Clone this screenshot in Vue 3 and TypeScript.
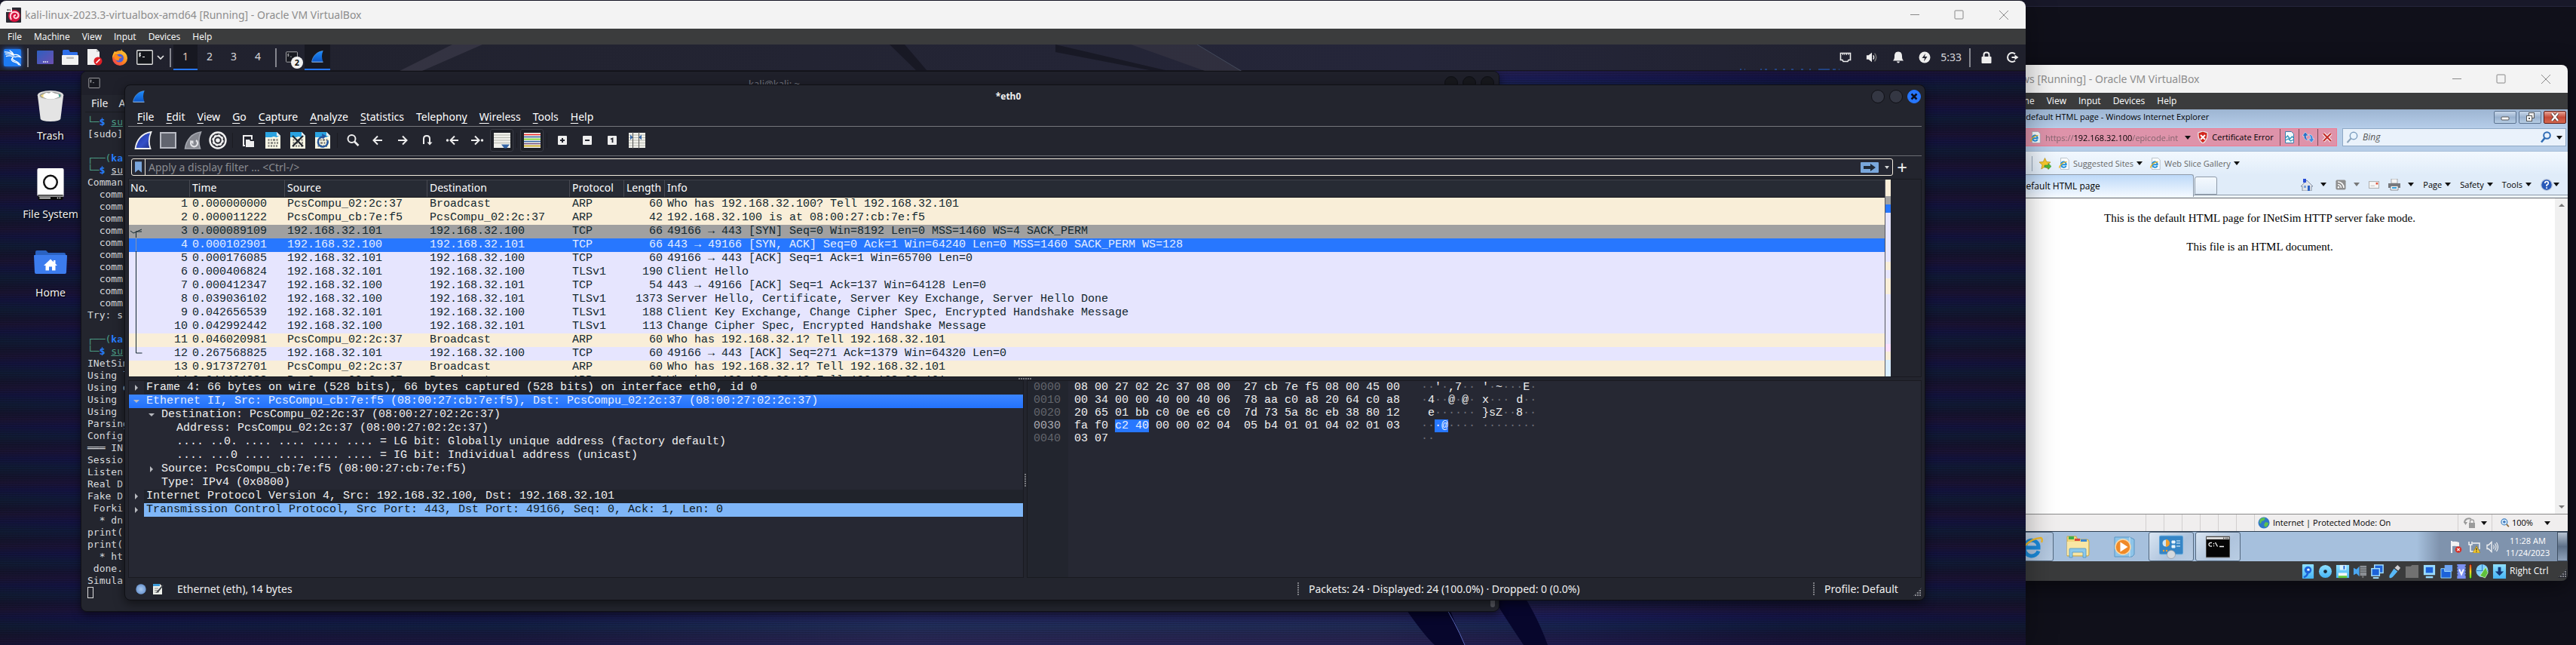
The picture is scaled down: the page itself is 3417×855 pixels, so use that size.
<script setup lang="ts">
type Tone = 'arp' | 'syn' | 'sel' | 'tcp' | 'udp' | 'dns'

interface Packet {
  no: number
  time: string
  src: string
  dst: string
  proto: string
  len: number
  info: string
  tone: Tone
}

const A = '192.168.32.100'
const B = '192.168.32.101'
const MAC1 = 'PcsCompu_02:2c:37'
const MAC2 = 'PcsCompu_cb:7e:f5'

const packets: Packet[] = [
  { no: 1, time: '0.000000000', src: MAC1, dst: 'Broadcast', proto: 'ARP', len: 60, info: 'Who has 192.168.32.100? Tell 192.168.32.101', tone: 'arp' },
  { no: 2, time: '0.000011222', src: MAC2, dst: MAC1, proto: 'ARP', len: 42, info: '192.168.32.100 is at 08:00:27:cb:7e:f5', tone: 'arp' },
  { no: 3, time: '0.000089109', src: B, dst: A, proto: 'TCP', len: 66, info: '49166 → 443 [SYN] Seq=0 Win=8192 Len=0 MSS=1460 WS=4 SACK_PERM', tone: 'syn' },
  { no: 4, time: '0.000102901', src: A, dst: B, proto: 'TCP', len: 66, info: '443 → 49166 [SYN, ACK] Seq=0 Ack=1 Win=64240 Len=0 MSS=1460 SACK_PERM WS=128', tone: 'sel' },
  { no: 5, time: '0.000176085', src: B, dst: A, proto: 'TCP', len: 60, info: '49166 → 443 [ACK] Seq=1 Ack=1 Win=65700 Len=0', tone: 'tcp' },
  { no: 6, time: '0.000406824', src: B, dst: A, proto: 'TLSv1', len: 190, info: 'Client Hello', tone: 'tcp' },
  { no: 7, time: '0.000412347', src: A, dst: B, proto: 'TCP', len: 54, info: '443 → 49166 [ACK] Seq=1 Ack=137 Win=64128 Len=0', tone: 'tcp' },
  { no: 8, time: '0.039036102', src: A, dst: B, proto: 'TLSv1', len: 1373, info: 'Server Hello, Certificate, Server Key Exchange, Server Hello Done', tone: 'tcp' },
  { no: 9, time: '0.042656539', src: B, dst: A, proto: 'TLSv1', len: 188, info: 'Client Key Exchange, Change Cipher Spec, Encrypted Handshake Message', tone: 'tcp' },
  { no: 10, time: '0.042992442', src: A, dst: B, proto: 'TLSv1', len: 113, info: 'Change Cipher Spec, Encrypted Handshake Message', tone: 'tcp' },
  { no: 11, time: '0.046020981', src: MAC1, dst: 'Broadcast', proto: 'ARP', len: 60, info: 'Who has 192.168.32.1? Tell 192.168.32.101', tone: 'arp' },
  { no: 12, time: '0.267568825', src: B, dst: A, proto: 'TCP', len: 60, info: '49166 → 443 [ACK] Seq=271 Ack=1379 Win=64320 Len=0', tone: 'tcp' },
  { no: 13, time: '0.917372701', src: MAC1, dst: 'Broadcast', proto: 'ARP', len: 60, info: 'Who has 192.168.32.1? Tell 192.168.32.101', tone: 'arp' },
  { no: 14, time: '0.944494888', src: MAC1, dst: 'Broadcast', proto: 'ARP', len: 60, info: 'Who has 192.168.32.1? Tell 192.168.32.101', tone: 'arp' },
]

const minimap: Tone[] = [
  ...packets.map((p) => p.tone),
  'tcp', 'tcp', 'tcp', 'tcp', 'tcp', 'tcp', 'dns', 'arp', 'udp', 'udp',
]

interface TreeRow { level: number; open?: boolean; leaf?: boolean; text: string; tone?: string }
const tree: TreeRow[] = [
  { level: 0, text: 'Frame 4: 66 bytes on wire (528 bits), 66 bytes captured (528 bits) on interface eth0, id 0', tone: 'top' },
  { level: 0, open: true, text: 'Ethernet II, Src: PcsCompu_cb:7e:f5 (08:00:27:cb:7e:f5), Dst: PcsCompu_02:2c:37 (08:00:27:02:2c:37)', tone: 'picked' },
  { level: 1, open: true, text: 'Destination: PcsCompu_02:2c:37 (08:00:27:02:2c:37)' },
  { level: 2, leaf: true, text: 'Address: PcsCompu_02:2c:37 (08:00:27:02:2c:37)' },
  { level: 2, leaf: true, text: '.... ..0. .... .... .... .... = LG bit: Globally unique address (factory default)' },
  { level: 2, leaf: true, text: '.... ...0 .... .... .... .... = IG bit: Individual address (unicast)' },
  { level: 1, text: 'Source: PcsCompu_cb:7e:f5 (08:00:27:cb:7e:f5)' },
  { level: 1, leaf: true, text: 'Type: IPv4 (0x0800)' },
  { level: 0, text: 'Internet Protocol Version 4, Src: 192.168.32.100, Dst: 192.168.32.101', tone: 'top' },
  { level: 0, text: 'Transmission Control Protocol, Src Port: 443, Dst Port: 49166, Seq: 0, Ack: 1, Len: 0', tone: 'related' },
]

interface HexRow { off: string; hex: string; ascii: string; mark?: boolean }
const hexRows: HexRow[] = [
  { off: '0000', hex: '08 00 27 02 2c 37 08 00  27 cb 7e f5 08 00 45 00', ascii: "··'·,7·· '·~···E·" },
  { off: '0010', hex: '00 34 00 00 40 00 40 06  78 aa c0 a8 20 64 c0 a8', ascii: '·4··@·@· x··· d··' },
  { off: '0020', hex: '20 65 01 bb c0 0e e6 c0  7d 73 5a 8c eb 38 80 12', ascii: ' e······ }sZ··8··' },
  { off: '0030', hex: 'fa f0 c2 40 00 00 02 04  05 b4 01 01 04 02 01 03', ascii: '···@···· ········', mark: true },
  { off: '0040', hex: '03 07', ascii: '··' },
]
const runs = (s: string) => s.match(/·+|[^·]+/g) ?? []

const wsMenu = ['File', 'Edit', 'View', 'Go', 'Capture', 'Analyze', 'Statistics', 'Telephony', 'Wireless', 'Tools', 'Help'].map((t) => {
  const i = t === 'Telephony' ? t.length - 1 : 0
  return { pre: t.slice(0, i), key: t[i], post: t.slice(i + 1), label: t }
})

const wsTools: string[][] = [
  ['fin', 'stop', 'restart', 'options'],
  ['open', 'docbin', 'docclose', 'docreload'],
  ['search', 'left', 'right', 'goto', 'first', 'last', 'autoscroll'],
  ['colorize'],
  ['zin', 'zout', 'zone', 'resize'],
]

const vmMenu = ['File', 'Machine', 'View', 'Input', 'Devices', 'Help']
const headers = ['No.', 'Time', 'Source', 'Destination', 'Protocol', 'Length', 'Info']
const shellA = ['Comman', '  comm', '  comm', '  comm', '  comm', '  comm', '  comm', '  comm', '  comm', '  comm', '  comm', 'Try: s']
const shellB = ['INetSim', 'Using l', 'Using d', 'Using', 'Using', 'Parsing', 'Config', '═══ IN', 'Sessio', 'Listen', 'Real D', 'Fake D', ' Forki', '  * dn', 'print(', 'print(', '  * ht', ' done.', 'Simula']
const vmIcons = ['hdd', 'cd', 'floppy', 'audio', 'net', 'usb', 'folder', 'display', 'record', 'cpu', 'meter', 'mouse', 'arrowdn']
</script>

<template>
  <div class="desktop">
    <svg class="defs" aria-hidden="true">
      <defs>
        <linearGradient id="gBlue" x1="0" y1="0" x2="1" y2="1"><stop offset="0" stop-color="#1a2f9e" /><stop offset=".6" stop-color="#3450c8" /><stop offset="1" stop-color="#1b2a80" /></linearGradient>
        <linearGradient id="gFin" x1="0" y1="0" x2="0" y2="1"><stop offset="0" stop-color="#1f8dfb" /><stop offset="1" stop-color="#0a54c4" /></linearGradient>
        <linearGradient id="gDesk" x1="0" y1="0" x2="1" y2="1"><stop offset="0" stop-color="#2d5fc0" /><stop offset="1" stop-color="#6d4fb0" /></linearGradient>
        <linearGradient id="gFox" x1="1" y1="0" x2="0" y2="1"><stop offset="0" stop-color="#ffd83a" /><stop offset=".5" stop-color="#ff8420" /><stop offset="1" stop-color="#f0305a" /></linearGradient>
        <linearGradient id="gVm" x1="0" y1="0" x2="0" y2="1"><stop offset="0" stop-color="#8fe0ff" /><stop offset="1" stop-color="#45b4f5" /></linearGradient>
        <radialGradient id="gBall"><stop offset="0" stop-color="#a8c8ef" /><stop offset="1" stop-color="#6d97d0" /></radialGradient>
        <linearGradient id="gMeter" x1="0" y1="0" x2="0" y2="1"><stop offset="0" stop-color="#ff3b20" /><stop offset=".5" stop-color="#ffd820" /><stop offset="1" stop-color="#50e020" /></linearGradient>
        <symbol id="i-debian" viewBox="0 0 20 20"><rect width="20" height="20" rx="1" fill="#2b2b33" /><circle cx="11" cy="11" r="8" fill="#d8123f" /><path d="M7 16c-3-6 0-11 6-10 4 1 5 6 1 8-4 1-5-4-1-4" fill="none" stroke="#ffd5dd" stroke-width="2" /><rect width="8" height="6" fill="#f4f4f4" /><path d="M2 2v2h1V2M5 2v2h1" stroke="#222" stroke-width=".8" fill="none" /></symbol>
        <symbol id="i-kali" viewBox="0 0 26 26"><rect x="1" y="1" width="24" height="24" rx="2" fill="#1d7bf2" /><path d="M2 5c6 0 10 1 13 4M3 8c5-1 9 0 12 2M4 11c3-1 6-1 9 0M9 3c2 1 4 3 6 6 4-1 7 0 9 3-3-1-5-1-7 0-3-1-6 1-3 4 3 2 8 2 10 8M14 13c-4 2-2 5 2 6 3 1 5 2 6 4" fill="none" stroke="#fff" stroke-width="1.3" /></symbol>
        <symbol id="i-deskt" viewBox="0 0 22 18"><rect width="22" height="18" rx="1" fill="url(#gDesk)" /><path d="M8 15h1.500M10.500 15h1.500M13 15h1.500" stroke="#fff" stroke-width="1.500" /></symbol>
        <symbol id="i-files" viewBox="0 0 22 20"><path d="M1 1.500Q1 0 2.500 0H9l2 3h9q1 0 1 1v5H1z" fill="#2f6fe8" /><rect y="7" width="22" height="13" rx="1" fill="#f2f2f2" /><rect x="6" y="9.500" width="10" height="2.500" rx="1" fill="#bdbdbd" /></symbol>
        <symbol id="i-text" viewBox="0 0 22 22"><path d="M1 0h12l4 4v17H1z" fill="#f1f1f1" /><path d="M13 0v4h4z" fill="#c4c4c4" /><circle cx="15" cy="16" r="5.500" fill="#dd1f26" /><path d="M12.500 18.500l5-5" stroke="#fff" stroke-width="1.600" /></symbol>
        <symbol id="i-fox" viewBox="0 0 22 22"><circle cx="11" cy="12" r="10" fill="url(#gFox)" /><path d="M13 0c-1 3 0 4 2 6l-7-1L4 3C2 6 1 9 1 12l4-6 12 2z" fill="#ffb52a" /><circle cx="10.500" cy="12" r="5.500" fill="#4b5fd8" /><path d="M3 8c3-1 5 0 7 2 2 0 3 0 4 1-2 1-5 1-4 4-4 1-7-2-7-7z" fill="#ff8a1c" /></symbol>
        <symbol id="i-term" viewBox="0 0 22 20"><rect x=".75" y=".75" width="20.500" height="18.500" rx="1" fill="#14161b" stroke="#e6e6e6" stroke-width="1.300" /><path d="M6 5c-3-1-3 1.500-1.500 1.500S6 9 3.200 8M4.600 3.500v6M8 9.500h3" stroke="#fff" stroke-width="1" fill="none" /></symbol>
        <symbol id="i-chev" viewBox="0 0 10 8"><path d="M1 2l4 4 4-4" fill="none" stroke="#e8e8e8" stroke-width="1.600" /></symbol>
        <symbol id="i-shark" viewBox="0 0 16 16"><path d="M.5 15C2 7 7 1.500 15.500.5 13.500 5 13.500 10 15.500 15z" fill="url(#gFin)" /><path d="M.5 15.200h15" stroke="#9cc6f4" stroke-width="1" /><path d="M.5 15C2 7 7 1.500 15.500.5" fill="none" stroke="#6fa8e8" stroke-width=".6" /></symbol>
        <symbol id="i-nic" viewBox="0 0 16 16"><path d="M1.500 2.500h13v9h-2.500l-1 2H5l-1-2H1.500z" fill="none" stroke="#eee" stroke-width="1.600" /><path d="M4.500 3v2M7 3v2M9.500 3v2M12 3v2" stroke="#eee" stroke-width="1" /></symbol>
        <symbol id="i-vol" viewBox="0 0 18 16"><path d="M1 5h3l5-4v14l-5-4H1z" fill="#eee" /><path d="M11 5q2 3 0 6" stroke="#eee" stroke-width="1.600" fill="none" /><path d="M13 2q5 6 0 12" stroke="#777" stroke-width="1.600" fill="none" /></symbol>
        <symbol id="i-bell" viewBox="0 0 16 16"><path d="M8 .5c4 0 5 3 5 6s.5 4.500 2 6H1c1.500-1.500 2-3 2-6s1-6 5-6z" fill="#eee" /><path d="M6 13.500h4q-.5 2-2 2t-2-2z" fill="#eee" /></symbol>
        <symbol id="i-power" viewBox="0 0 16 16"><circle cx="8" cy="8" r="7.500" fill="#eee" /><path d="M9 3L4.500 9H8l-1 4.500L11.500 7H8z" fill="#23242f" /></symbol>
        <symbol id="i-lock" viewBox="0 0 16 16"><rect x="1.500" y="7" width="13" height="9" rx="1" fill="#eee" /><path d="M4.500 7V4.500q0-3 3.500-3t3.500 3V7" fill="none" stroke="#eee" stroke-width="2" /></symbol>
        <symbol id="i-out" viewBox="0 0 16 16"><path d="M11 3.500A6 6 0 1 0 11 12.500" fill="none" stroke="#eee" stroke-width="2" /><path d="M6.500 8h5" stroke="#eee" stroke-width="2" /><path d="M10.500 4.500L15.500 8l-5 3.500z" fill="#eee" /></symbol>
        <symbol id="i-trash" viewBox="0 0 36 44"><path d="M0 7l4 33q1 4 14 4t14-4l4-33z" fill="#e4e4e4" /><ellipse cx="18" cy="7.500" rx="18" ry="6.500" fill="#dcdcdc" /><ellipse cx="18" cy="8" rx="15" ry="5" fill="#9a9a9a" /><path d="M4 8l6-3 3 5-5 1z" fill="#f0d880" /><path d="M27 6l5 1-1 3-5 1z" fill="#38a08c" /><path d="M8 7l4-3 4 1 3-2 5 2 5 1 1 4q-6 3-12 3t-10-3z" fill="#fff" /></symbol>
        <symbol id="i-disk" viewBox="0 0 36 43"><rect width="36" height="38" rx="2" fill="#fdfdfd" /><circle cx="18" cy="19" r="9" fill="none" stroke="#111" stroke-width="2.500" /><path d="M1 36h34v5q0 2-2 2H3q-2 0-2-2z" fill="#0b0b0b" /><path d="M2 38h34" stroke="#fdfdfd" stroke-width="1" /><path d="M3 40.500h15M27 40.500h1.500M30 40.500h1.500" stroke="#fff" stroke-width="1.500" /></symbol>
        <symbol id="i-home" viewBox="0 0 44 32"><path d="M2 2q0-2 2-2h12l3 3h21q2 0 2 2v9H2z" fill="#2a62c2" /><path d="M0 7q0-1 1-1h42q1 0 1 1l-1 22q0 2-2 2H3q-2 0-2-2z" fill="#3c7cee" /><path d="M22 11.500L13 20h2.500v6.500h4.500v-5h4v5h4.500V20H31l-2.500-2.400V13H26v2.200z" fill="#fff" /></symbol>
        <symbol id="t-fin" viewBox="0 0 24 24"><path d="M1.500 23C3 12 10 2.500 22.500 1 19 9 19 16 21.500 23z" fill="url(#gBlue)" stroke="#f0f0f0" stroke-width="1.800" /></symbol>
        <symbol id="t-stop" viewBox="0 0 24 24"><rect x="2" y="2" width="20" height="20" fill="#62656f" stroke="#b9bbc3" stroke-width="2" /></symbol>
        <symbol id="t-restart" viewBox="0 0 24 24"><path d="M1.500 23C3 12 10 2.500 22.500 1 19 9 19 16 21.500 23z" fill="#85878f" stroke="#a6a8b0" stroke-width="1.600" /><path d="M10 13a4.500 4.500 0 1 0 6-1" fill="none" stroke="#e2e2e6" stroke-width="2.200" /><path d="M7.500 12.500h5v5z" fill="#e2e2e6" /></symbol>
        <symbol id="t-options" viewBox="0 0 24 24"><circle cx="12" cy="12" r="11.700" fill="#f1f1f1" /><circle cx="12" cy="12" r="9.300" fill="#2c2d35" /><circle cx="12" cy="12" r="7" fill="#f1f1f1" stroke="#f1f1f1" stroke-width="1.500" stroke-dasharray="3 2.500" /><circle cx="12" cy="12" r="3.800" fill="#f1f1f1" stroke="#2c2d35" stroke-width="2" /></symbol>
        <symbol id="t-open" viewBox="0 0 24 24"><path d="M8 19H6V6h11v5" fill="none" stroke="#eee" stroke-width="2" /><path d="M9 11h5l1 2h5v8H9z" fill="#eee" /></symbol>
        <symbol id="d-base" viewBox="0 0 24 24"><path d="M2 1h15l5 5v17H2z" fill="#f7f6e4" /><path d="M2 1h15l5 5-3 .5L17 8l-4-1-3 1H2z" fill="#2aa3e0" /><path d="M17 1v5h5z" fill="#eee" /><path d="M5.500 11.500h2M9 11.500h1.500M12 11.500h3M16.500 11.500h2M5.500 15.500h2M9 15.500h3M13.500 15.500h2M17 15.500h2M5.500 19.500h2M9 19.500h2M12.500 19.500h2M16 19.500h2" stroke="#7d7d78" stroke-width="2.600" /></symbol>
        <symbol id="t-docbin" viewBox="0 0 24 24"><use href="#d-base" /></symbol>
        <symbol id="t-docclose" viewBox="0 0 24 24"><use href="#d-base" /><path d="M5 6l14 14M19 6L5 20" stroke="#23272d" stroke-width="2.200" /></symbol>
        <symbol id="t-docreload" viewBox="0 0 24 24"><use href="#d-base" /><path d="M18.500 12a6.500 6.500 0 1 1-6-4.500" fill="none" stroke="#24569c" stroke-width="2.400" /><path d="M11 3l6 3.500-5 4z" fill="#24569c" /></symbol>
        <symbol id="t-search" viewBox="0 0 24 24"><circle cx="10.500" cy="10" r="5" fill="none" stroke="#eee" stroke-width="2" /><path d="M14 13.500l5.500 5.500" stroke="#eee" stroke-width="2.600" /></symbol>
        <symbol id="t-left" viewBox="0 0 24 24"><path d="M18 12H7M12 6.500L6.500 12l5.500 5.500" fill="none" stroke="#eee" stroke-width="2" /></symbol>
        <symbol id="t-right" viewBox="0 0 24 24"><path d="M6 12h11M12 6.500l5.500 5.500-5.500 5.500" fill="none" stroke="#eee" stroke-width="2" /></symbol>
        <symbol id="t-goto" viewBox="0 0 24 24"><path d="M7 17V10q0-4 4-4t4 4v7" fill="none" stroke="#eee" stroke-width="2" /><path d="M11.500 14.500h7L15 18.500z" fill="#eee" /></symbol>
        <symbol id="t-first" viewBox="0 0 24 24"><path d="M20 12h-9M15 6.500L9.500 12l5.500 5.500" fill="none" stroke="#eee" stroke-width="2" /><circle cx="5.500" cy="12" r="1.700" fill="#eee" /></symbol>
        <symbol id="t-last" viewBox="0 0 24 24"><path d="M4 12h9M9 6.500l5.500 5.500L9 17.500" fill="none" stroke="#eee" stroke-width="2" /><circle cx="18.500" cy="12" r="1.700" fill="#eee" /></symbol>
        <symbol id="t-autoscroll" viewBox="0 0 24 24"><rect x="1" y="2" width="22" height="20" fill="#f0f0ea" /><path d="M1 5h22M1 8.500h22M1 12h22M1 15.500h22" stroke="#b5b8ae" stroke-width="1.200" /><path d="M11 17.500h11l-4 5h-3z" fill="#3465a4" /></symbol>
        <symbol id="t-colorize" viewBox="0 0 24 24"><rect x="1" y="2" width="22" height="20" fill="#f0f0ea" /><path d="M1 4.500h22" stroke="#ef2929" stroke-width="1.300" /><path d="M1 7.500h22M1 13.500h22" stroke="#3465a4" stroke-width="1.300" /><path d="M1 10.500h22" stroke="#73d216" stroke-width="1.300" /><path d="M1 16.500h22" stroke="#75507b" stroke-width="1.300" /><path d="M1 19.500h22" stroke="#c4a000" stroke-width="1.300" /></symbol>
        <symbol id="t-zin" viewBox="0 0 24 24"><rect x="6" y="6" width="12" height="12" rx="1" fill="#eee" /><path d="M12 9v6M9 12h6" stroke="#23252e" stroke-width="2" /></symbol>
        <symbol id="t-zout" viewBox="0 0 24 24"><rect x="6" y="6" width="12" height="12" rx="1" fill="#eee" /><path d="M9 12h6" stroke="#23252e" stroke-width="2" /></symbol>
        <symbol id="t-zone" viewBox="0 0 24 24"><rect x="6" y="6" width="12" height="12" rx="1" fill="#eee" /><path d="M10 10.500l2.500-1V15" fill="none" stroke="#23252e" stroke-width="1.800" /></symbol>
        <symbol id="t-resize" viewBox="0 0 24 24"><rect x="1" y="2" width="22" height="20" fill="#f0f0ea" /><path d="M1 5h22M1 8.500h22M1 12h22M1 15.500h22M1 19h22" stroke="#b5b8ae" stroke-width="1.200" /><path d="M6.500 1v22M14.500 1v22" stroke="#555" stroke-width="1" /><path d="M3 4.500l3.500 3.500L3 11.500zM18 4.500L14.500 8l3.500 3.500z" fill="#3465a4" /></symbol>
        <symbol id="i-ie" viewBox="0 0 16 18"><path d="M3 .5h9l3 3v14H3z" fill="#fafcfe" stroke="#9aa3ac" stroke-width=".7" /><path d="M11 10.500H3.500A3.700 3.700 0 0 1 11 9.500zM11 12.500a4 4 0 0 1-7.300-1" fill="none" stroke="#2290d8" stroke-width="2.200" /><path d="M.8 15.500C1 11 6 6.500 12 6" fill="none" stroke="#eeb522" stroke-width="1.400" /></symbol>
        <symbol id="i-bigie" viewBox="0 0 32 32"><path d="M26 17H8.500A8 8 0 0 1 26 15zM26 21.500A9.500 9.500 0 0 1 7.500 18" fill="none" stroke="#1b8ada" stroke-width="5" /><path d="M1 29C1 20 13 5 29 4q3 1 1 6" fill="none" stroke="#efb92c" stroke-width="2.400" /></symbol>
        <symbol id="i-shield" viewBox="0 0 16 16"><path d="M8 0l6 2q1 9-6 14Q1 11 2 2z" fill="#d3281f" stroke="#e9e9e9" stroke-width="1.300" /><path d="M5 5l6 6M11 5l-6 6" stroke="#fff" stroke-width="2" /></symbol>
        <symbol id="i-compat" viewBox="0 0 16 16"><path d="M2.500.5h8l3 3v12h-11z" fill="#f3fafd" stroke="#3c7fae" stroke-width="1" /><path d="M2.500 9l3-3 3 4 3-3 2 2M2.500 12l4-2 3 3 4-2" fill="none" stroke="#2f94b8" stroke-width="1.300" /></symbol>
        <symbol id="i-refresh" viewBox="0 0 16 16"><path d="M0 6l4-5 4 5H5q0 4 3 6Q2 12 2 6z" fill="#2a6fc4" stroke="#e4f0fb" stroke-width=".6" /><path d="M16 10l-4 5-4-5h3q0-4-3-6 6 0 6 6z" fill="#3c8ee0" stroke="#e4f0fb" stroke-width=".6" /></symbol>
        <symbol id="i-x" viewBox="0 0 16 16"><path d="M3 3l10 10M13 3L3 13" stroke="#fff" stroke-width="4" /><path d="M3 3l10 10M13 3L3 13" stroke="#c3312d" stroke-width="2.400" /></symbol>
        <symbol id="i-lens" viewBox="0 0 16 16"><circle cx="10" cy="6" r="4.700" fill="#eaf5ff" stroke="#7fa0c0" stroke-width="1.500" /><path d="M6.500 9.500L1.500 15" stroke="#8da4ba" stroke-width="2" /></symbol>
        <symbol id="i-find" viewBox="0 0 16 16"><circle cx="9.500" cy="5.500" r="4.300" fill="none" stroke="#2f6cb4" stroke-width="2" /><path d="M6.500 9L2 14.500" stroke="#2f6cb4" stroke-width="2.600" /></symbol>
        <symbol id="i-star" viewBox="0 0 16 16"><path d="M7.500.5l2.200 5 5.300.5-4 3.500 1.200 5.500-4.700-3-4.700 3L4 9.500 0 6l5.300-.5z" fill="#f8c92e" stroke="#b98e14" stroke-width=".7" /><path d="M7 10h5V7.500l4 4-4 4V13H7z" fill="#4dbb3c" stroke="#2a7d22" stroke-width=".5" /></symbol>
        <symbol id="i-house" viewBox="0 0 16 16"><path d="M8 2L0 10h2v6h12v-6h2z" fill="#dfe3ea" stroke="#6f7d93" stroke-width=".8" /><rect x="9" y="9" width="3" height="7" fill="#2a5fc0" /><rect x="4" y="9" width="3" height="3" fill="#7aa2d8" /><path d="M3 0h4v5H3z" fill="#2a4fd8" /></symbol>
        <symbol id="i-rss" viewBox="0 0 16 16"><rect x=".5" y=".5" width="15" height="15" rx="2" fill="#8f8f8f" /><path d="M3.500 7.500a5 5 0 0 1 5 5M3.500 3.500a9 9 0 0 1 9 9" fill="none" stroke="#fff" stroke-width="1.700" /><circle cx="4.500" cy="11.700" r="1.400" fill="#fff" /></symbol>
        <symbol id="i-mail" viewBox="0 0 16 16"><rect x=".5" y="3" width="15" height="10" fill="#f6f6f6" stroke="#a5a5a5" /><rect x="11" y="4.500" width="3" height="3" fill="#e0533c" /><path d="M3 9.500h6" stroke="#bbb" /></symbol>
        <symbol id="i-print" viewBox="0 0 16 16"><path d="M4 0h8v6H4z" fill="#f4f4f4" stroke="#888" stroke-width=".7" /><path d="M0 6h16v6H0z" fill="#77797d" /><path d="M3 9.500h10V15H3z" fill="#f2f6fa" stroke="#666" stroke-width=".7" /><path d="M5 12h6" stroke="#38a0d8" stroke-width="2" /></symbol>
        <symbol id="i-help" viewBox="0 0 16 16"><circle cx="8" cy="8" r="7.300" fill="#2858b8" stroke="#b9c6dc" stroke-width="1.200" /><path d="M5.800 6q0-2.500 2.300-2.500T10.300 6q0 1.200-2.200 2.300V10M8.100 11.300v1.700" fill="none" stroke="#fff" stroke-width="1.700" /></symbol>
        <symbol id="i-globe" viewBox="0 0 16 16"><circle cx="8" cy="8" r="7.500" fill="#2f78c8" /><path d="M3 3q4-3 7-1l-2 3-3 1-1 3-2-1zM10 7l4 1q0 4-4 6l-2-3z" fill="#5fc24c" /></symbol>
        <symbol id="i-prot" viewBox="0 0 16 16"><path d="M1 8a6 6 0 0 1 9-5" fill="none" stroke="#9a9a9a" stroke-width="2" /><path d="M0 7h5L2.500 11z" fill="#9a9a9a" /><rect x="7" y="8" width="8" height="7" fill="#9a9a9a" /><path d="M8.500 8V6q0-2 2.500-2t2.500 2v2" fill="none" stroke="#9a9a9a" stroke-width="1.300" /></symbol>
        <symbol id="i-mag" viewBox="0 0 16 16"><circle cx="6.500" cy="6.500" r="5.300" fill="#d7ecfb" stroke="#3a7cc0" stroke-width="1.500" /><path d="M6.500 4v5M4 6.500h5" stroke="#2563b0" stroke-width="1.500" /><path d="M10.500 10.500l4 4.500" stroke="#8c6a3c" stroke-width="2.400" /></symbol>
        <symbol id="w-expl" viewBox="0 0 32 32"><path d="M2 2h12l2 4h12q3 0 3 3v17q0 2-2 2H2z" fill="#f2d67c" stroke="#c9a748" /><path d="M4 2h7v4H4z" fill="#3fae4a" /><path d="M12 5h7v3h-7z" fill="#d8483c" /><path d="M20 6h8v3h-8z" fill="#3c87d0" /><path d="M2 9h28v18H2z" fill="#f9e6a4" /><path d="M5 30V19q0-1 1-1h20q1 0 1 1v11h-4v-7H9v7z" fill="#8cc8ea" stroke="#4f95c4" stroke-width=".8" /></symbol>
        <symbol id="w-wmp" viewBox="0 0 32 32"><path d="M3 3h20l6 3v20l-3 3H3z" fill="#8ec4e8" stroke="#5b96c4" /><path d="M23 3v26" stroke="#d5ebf8" /><circle cx="14" cy="16" r="10" fill="#f08a28" stroke="#fbd9a8" stroke-width="1.500" /><path d="M10.500 9.500l10 6.500-10 6.500z" fill="#fff" /></symbol>
        <symbol id="w-panel" viewBox="0 0 32 32"><rect y="1" width="32" height="25" rx="2" fill="#3585c6" stroke="#8cc0e6" /><circle cx="9" cy="11" r="4.500" fill="#cfe6f6" /><path d="M9 11V6a5 5 0 0 1 0 10z" fill="#f0a030" /><path d="M17 8h4v3h-4zM17 14h4v3h-4zM23 8h5M23 11h5M23 15h5" fill="#e8f4fc" stroke="#e8f4fc" stroke-width="1" /><circle cx="6" cy="21" r="1.200" fill="#f0a030" /><circle cx="10" cy="21" r="1.200" fill="#f0a030" /><circle cx="16" cy="26" r="5.500" fill="#d5d9de" stroke="#8a8f98" stroke-width=".6" /></symbol>
        <symbol id="w-cmd" viewBox="0 0 32 28"><rect width="32" height="28" fill="#050505" stroke="#8f8f8f" /><path d="M1 1h30v3H1z" fill="#d8d8d8" /><path d="M23 2.500h1.500M26 2.500h1.500M28.500 2.500H30" stroke="#333" stroke-width="1.500" /><path d="M8 8.500q-4-.5-4 2.300T8 13M10.500 9v1.500M10.500 12v1.200M12.500 8l3 5.500M18 13.500h6" fill="none" stroke="#f2f2f2" stroke-width="1.300" /></symbol>
        <symbol id="w-flag" viewBox="0 0 16 16"><path d="M2 0v16" stroke="#fff" stroke-width="1.800" /><path d="M3 1q4-1 9 1v6q-5-2-9-1z" fill="#f2f2f2" /><circle cx="11" cy="11.500" r="4.300" fill="#d6322a" /><path d="M9.300 9.800l3.400 3.400M12.700 9.800l-3.400 3.400" stroke="#fff" stroke-width="1.200" /></symbol>
        <symbol id="w-net" viewBox="0 0 16 16"><path d="M1 1v4h4V1M3 5v9h5M6 3h9v8" fill="none" stroke="#f4f4f4" stroke-width="1.500" /><path d="M11 6.500l5 9.500H6z" fill="#f5c92e" stroke="#7d6510" stroke-width=".5" /><path d="M11 9.500v3M11 13.500v1.200" stroke="#222" stroke-width="1.200" /></symbol>
        <symbol id="w-vol" viewBox="0 0 16 16"><path d="M1 5.500h2l4-4v13l-4-4H1z" fill="none" stroke="#f4f4f4" stroke-width="1.300" /><path d="M9.500 5.500q1.500 2.500 0 5M11.500 3.500q3 4.500 0 9M13.500 2q4 6 0 12" fill="none" stroke="#f4f4f4" stroke-width="1.100" /></symbol>
        <symbol id="v-hdd" viewBox="0 0 18 20"><rect x="1" width="16" height="20" rx="1" fill="url(#gVm)" /><circle cx="9" cy="8" r="5" fill="#1c62d8" /><circle cx="9.500" cy="7.500" r="1.800" fill="#e8f8ff" /><path d="M3 18q5-1 6-7" stroke="#1c62d8" stroke-width="2.500" fill="none" /></symbol>
        <symbol id="v-cd" viewBox="0 0 18 20"><circle cx="9" cy="10" r="9" fill="url(#gVm)" /><circle cx="9" cy="10" r="2.500" fill="#1b2a38" /></symbol>
        <symbol id="v-floppy" viewBox="0 0 18 20"><path d="M0 1h18v18H0z" fill="url(#gVm)" /><path d="M5 1h9v7H5z" fill="#d8f2ff" /><path d="M10 2h2v5h-2z" fill="#1c62d8" /><path d="M3 12h12v7H3z" fill="#f6f6f6" /><path d="M3 16h12v3H3z" fill="#62c93c" /></symbol>
        <symbol id="v-audio" viewBox="0 0 18 20"><path d="M0 5l4 2 4-4v14l-4-4-4 2z" fill="#4aa6f0" /><rect x="9" y="2" width="9" height="14" fill="#8b8f94" /><path d="M9 5h9M9 8h9M9 11h9" stroke="#55585c" /><path d="M13 16v3" stroke="#777" stroke-width="2" /></symbol>
        <symbol id="v-net" viewBox="0 0 18 20"><rect x="5" y="1" width="12" height="11" fill="#1c62d8" stroke="#a6e2ff" stroke-width="1.500" /><rect x="1" y="6" width="11" height="10" fill="#1c62d8" stroke="#a6e2ff" stroke-width="1.500" /><path d="M3 19h8" stroke="#a6e2ff" stroke-width="2" /></symbol>
        <symbol id="v-usb" viewBox="0 0 18 20"><path d="M13 1l4 4-3 4-5-4z" fill="#cfcfd2" /><path d="M8 6l5 4-7 8q-3 2-4 1t0-4z" fill="#58b8f6" /></symbol>
        <symbol id="v-folder" viewBox="0 0 18 20"><path d="M0 3h7l2-2h9v18H0z" fill="#717171" /></symbol>
        <symbol id="v-display" viewBox="0 0 18 20"><rect x="1" y="1" width="16" height="14" fill="#9adcff" /><rect x="4" y="4" width="10" height="8" fill="#1c62d8" /><path d="M4 18h10" stroke="#9adcff" stroke-width="2.500" /></symbol>
        <symbol id="v-record" viewBox="0 0 18 20"><path d="M6 1h11v9H6z" fill="#6da4f2" /><path d="M1 6h5v4h9v9H1z" fill="#1c62d8" stroke="#9adcff" stroke-width="1" /></symbol>
        <symbol id="v-cpu" viewBox="0 0 12 20"><rect width="12" height="20" fill="#7a90f0" /><path d="M3 7l3 7 3-7" fill="none" stroke="#fff" stroke-width="2" /><path d="M0 3h1M0 7h1M0 11h1M0 15h1M11 3h1M11 7h1M11 11h1M11 15h1" stroke="#233" stroke-width="2" /></symbol>
        <symbol id="v-meter" viewBox="0 0 4 20"><rect width="4" height="20" fill="url(#gMeter)" stroke="#111" /></symbol>
        <symbol id="v-mouse" viewBox="0 0 18 20"><ellipse cx="9" cy="9" rx="8.500" ry="9" fill="#7fd0ff" /><path d="M9 0v9M1 9h16" stroke="#2a7ac0" /><path d="M6 16l8-12 3 8-4 7z" fill="#5fc23c" stroke="#d6f5c8" stroke-width=".8" /></symbol>
        <symbol id="v-arrowdn" viewBox="0 0 18 20"><rect width="18" height="20" fill="url(#gVm)" /><path d="M7 4h4v6h4l-6 6-6-6h4z" fill="#123a78" /></symbol>
      </defs>
    </svg>

    <!-- Windows 7 guest -->
    <section class="vm vm-win">
      <header class="vm-title">
        <svg class="vm-logo"><use href="#i-debian" /></svg>
        <span class="vm-name">Windows [Running] - Oracle VM VirtualBox</span>
        <div class="vm-ctl">
          <button aria-label="Minimize"><svg viewBox="0 0 14 14"><path d="M1 6.500h12" /></svg></button>
          <button aria-label="Maximize"><svg viewBox="0 0 14 14"><rect x="1" y="1" width="11" height="11" rx="1" /></svg></button>
          <button aria-label="Close"><svg viewBox="0 0 14 14"><path d="M1 1l12 12M13 1L1 13" /></svg></button>
        </div>
      </header>
      <nav class="vm-menu"><button v-for="m in vmMenu" :key="m">{{ m }}</button></nav>
      <div class="ie">
        <div class="ie-title">
          <svg class="s16"><use href="#i-ie" /></svg>
          <span>INetSim default HTML page - Windows Internet Explorer</span>
          <div class="ie-ctl">
            <button aria-label="Minimize"><svg viewBox="0 0 16 12"><rect x="3" y="6" width="10" height="4" rx="1" fill="#fff" stroke="#555" /></svg></button>
            <button aria-label="Restore"><svg viewBox="0 0 16 12"><rect x="6.500" y=".5" width="7" height="7" fill="#eee" stroke="#555" /><rect x="3.500" y="4.500" width="7" height="7" fill="#fff" stroke="#555" /><rect x="6" y="7" width="2" height="2" fill="#555" /></svg></button>
            <button class="red" aria-label="Close"><svg viewBox="0 0 16 12"><path d="M4 1l8 10M12 1L4 11" stroke="#54332f" stroke-width="4" /><path d="M4 1l8 10M12 1L4 11" stroke="#fff" stroke-width="2.500" /></svg></button>
          </div>
        </div>
        <div class="ie-nav">
          <div class="ie-addr">
            <svg class="s16"><use href="#i-ie" /></svg>
            <input class="url" value="https://192.168.32.100/epicode.int" aria-label="Address" />
            <i class="dd" />
            <button class="cert"><svg class="s16"><use href="#i-shield" /></svg>Certificate Error</button>
            <button class="cell" aria-label="Compatibility View"><svg class="s16"><use href="#i-compat" /></svg></button>
            <button class="cell" aria-label="Refresh"><svg class="s16"><use href="#i-refresh" /></svg></button>
            <button class="cell" aria-label="Stop"><svg class="s16"><use href="#i-x" /></svg></button>
          </div>
          <div class="ie-search">
            <svg class="s16"><use href="#i-lens" /></svg>
            <input placeholder="Bing" aria-label="Search" />
            <svg class="s16"><use href="#i-find" /></svg><i class="dd" />
          </div>
        </div>
        <div class="ie-fav">
          <button class="favs">Favorites</button>
          <button aria-label="Add to Favorites Bar"><svg class="s16"><use href="#i-star" /></svg></button>
          <button><svg class="s16"><use href="#i-ie" /></svg>Suggested Sites<i class="dd" /></button>
          <button><svg class="s16"><use href="#i-ie" /></svg>Web Slice Gallery<i class="dd" /></button>
        </div>
        <div class="ie-tabs">
          <button class="tab"><svg class="s16"><use href="#i-ie" /></svg>INetSim default HTML page</button>
          <button class="newtab" aria-label="New Tab" />
          <div class="ie-cmd">
            <button class="wide" aria-label="Home"><svg class="s16"><use href="#i-house" /></svg><i class="dd" /></button>
            <button class="wide" aria-label="Feeds"><svg class="s14"><use href="#i-rss" /></svg><i class="dd dim" /></button>
            <button aria-label="Read mail"><svg class="s14"><use href="#i-mail" /></svg></button>
            <button class="wide" aria-label="Print"><svg class="s16"><use href="#i-print" /></svg><i class="dd" /></button>
            <button>Page<i class="dd" /></button>
            <button>Safety<i class="dd" /></button>
            <button>Tools<i class="dd" /></button>
            <button class="tight" aria-label="Help"><svg class="s16"><use href="#i-help" /></svg><i class="dd" /></button>
          </div>
        </div>
        <div class="ie-body">
          <main class="ie-page">
            <p>This is the default HTML page for INetSim HTTP server fake mode.</p>
            <p>This file is an HTML document.</p>
          </main>
          <div class="ie-scroll"><i class="up" /><i class="down" /></div>
        </div>
        <div class="ie-status">
          <span class="grow" /><span v-for="n in 6" :key="n" class="cellw" />
          <span class="zone"><svg class="s16"><use href="#i-globe" /></svg>Internet | Protected Mode: On</span>
          <span class="prot"><svg class="s16"><use href="#i-prot" /></svg><i class="dd" /></span>
          <span class="zoomer"><svg class="s12"><use href="#i-mag" /></svg>100%<i class="dd" /></span>
        </div>
      </div>
      <div class="w-task">
        <button class="on" aria-label="Internet Explorer"><svg><use href="#i-bigie" /></svg></button>
        <button aria-label="Explorer"><svg><use href="#w-expl" /></svg></button>
        <button aria-label="Media Player"><svg><use href="#w-wmp" /></svg></button>
        <button class="on" aria-label="Control Panel"><svg><use href="#w-panel" /></svg></button>
        <button class="on" aria-label="Command Prompt"><svg><use href="#w-cmd" /></svg></button>
        <div class="w-tray">
          <svg class="s16"><use href="#w-flag" /></svg><svg class="s16"><use href="#w-net" /></svg><svg class="s16"><use href="#w-vol" /></svg>
          <div class="w-clock"><span>11:28 AM</span><span>11/24/2023</span></div>
          <button class="peek" aria-label="Show desktop" />
        </div>
      </div>
      <footer class="vm-status">
        <svg v-for="i in vmIcons" :key="i" :class="i"><use :href="'#v-' + i" /></svg>
        <span>Right Ctrl</span>
        <i class="grip" />
      </footer>
    </section>

    <!-- Kali guest -->
    <section class="vm vm-kali">
      <header class="vm-title">
        <svg class="vm-logo"><use href="#i-debian" /></svg>
        <span class="vm-name">kali-linux-2023.3-virtualbox-amd64 [Running] - Oracle VM VirtualBox</span>
        <div class="vm-ctl">
          <button aria-label="Minimize"><svg viewBox="0 0 14 14"><path d="M1 6.500h12" /></svg></button>
          <button aria-label="Maximize"><svg viewBox="0 0 14 14"><rect x="1" y="1" width="11" height="11" rx="1" /></svg></button>
          <button aria-label="Close"><svg viewBox="0 0 14 14"><path d="M1 1l12 12M13 1L1 13" /></svg></button>
        </div>
      </header>
      <nav class="vm-menu"><button v-for="m in vmMenu" :key="m">{{ m }}</button></nav>

      <div class="panel">
        <svg class="streaks" aria-hidden="true">
          <path d="M530 35L600 0h40L560 35z" fill="#555465" opacity=".35" />
          <path d="M1180 0l36 35h14L1200 0zM1400 10l130 25h20L1400 0z" fill="#14141e" opacity=".7" />
          <path d="M1500 0h88l60 35h-50z" fill="#3c3a46" opacity=".5" />
          <path d="M1588 0l58 35" stroke="#4a5568" opacity=".7" />
          <path d="M2308 33h2m4 0h1m20 0h2m4 0h3m10 0h3m8 0h3m8 0h3m10 0h3m8 0h2m10 0h15m4 0h4m4 0h1" stroke="#2777ff" stroke-width="1" opacity=".8" />
        </svg>
        <button class="kali" aria-label="Applications"><svg><use href="#i-kali" /></svg></button>
        <span class="bar" />
        <div class="launch">
          <button aria-label="Show desktop"><svg class="d"><use href="#i-deskt" /></svg></button>
          <button aria-label="Files"><svg><use href="#i-files" /></svg></button>
          <button aria-label="Text editor"><svg><use href="#i-text" /></svg></button>
          <button aria-label="Firefox"><svg><use href="#i-fox" /></svg></button>
          <button aria-label="Terminal"><svg><use href="#i-term" /></svg></button>
        </div>
        <svg class="chev"><use href="#i-chev" /></svg>
        <span class="bar" />
        <button v-for="n in 4" :key="n" class="ws" :class="{ on: n === 1 }">{{ n }}</button>
        <span class="bar" />
        <button class="task" aria-label="Terminal windows"><svg class="tt"><use href="#i-term" /></svg><b>2</b></button>
        <button class="task on" aria-label="Wireshark"><svg><use href="#i-shark" /></svg></button>
        <div class="sys">
          <svg><use href="#i-nic" /></svg><svg><use href="#i-vol" /></svg><svg><use href="#i-bell" /></svg><svg><use href="#i-power" /></svg>
          <time>5:33</time><span class="bar" />
          <svg><use href="#i-lock" /></svg><svg><use href="#i-out" /></svg>
        </div>
      </div>

      <div class="wall">
        <svg class="art" aria-hidden="true">
          <path d="M1830 660Q1880 740 1903 761H1943Q1915 700 1900 640z" fill="#07062c" />
          <path d="M1912 702Q1930 730 1943 761" fill="none" stroke="#5a68b8" stroke-width="1" />
          <path d="M1975 690Q2000 730 2021 761H2053Q2040 725 2018 690z" fill="#07062c" />
        </svg>
        <div class="icons">
          <a href="#trash"><svg class="tr"><use href="#i-trash" /></svg>Trash</a>
          <a href="#fs"><svg class="fs"><use href="#i-disk" /></svg>File System</a>
          <a href="#home"><svg class="hm"><use href="#i-home" /></svg>Home</a>
        </div>

        <section class="term">
          <div class="term-title">
            <svg><use href="#i-term" /></svg><span>kali@kali: ~</span>
            <div><i /><i /><i /></div>
          </div>
          <nav class="term-menu"><button>File</button><button>Actions</button></nav>
          <pre class="shell"><span class="g">└─</span><b>$</b> <u class="g">su</u>
[sudo] 

<span class="g">┌──(</span><b>ka</b>
<span class="g">└─</span><b>$</b> <u>su</u>
<template v-for="(l, i) in shellA" :key="i">{{ l + '\n' }}</template>
<span class="g">┌──(</span><b>ka</b>
<span class="g">└─</span><b>$</b> <u class="g">su</u>
<template v-for="(l, i) in shellB" :key="i">{{ l + '\n' }}</template><span class="cursor" /></pre>
          <i class="thumb" />
        </section>

        <section class="shark">
          <header class="sh-title">
            <svg class="s16"><use href="#i-shark" /></svg>
            <h1>*eth0</h1>
            <div><button aria-label="Minimize" /><button aria-label="Maximize" /><button class="x" aria-label="Close"><svg viewBox="0 0 18 18"><path d="M5.500 5.500l7 7M12.500 5.500l-7 7" stroke="#0c1020" stroke-width="2.600" /></svg></button></div>
          </header>
          <nav class="sh-menu"><button v-for="m in wsMenu" :key="m.label">{{ m.pre }}<u>{{ m.key }}</u>{{ m.post }}</button></nav>
          <div class="sh-tools">
            <template v-for="(g, gi) in wsTools" :key="gi">
              <span v-if="gi" class="sep" />
              <button v-for="t in g" :key="t" :class="{ on: t === 'autoscroll' || t === 'colorize' }" :aria-label="t"><svg><use :href="'#t-' + t" /></svg></button>
            </template>
          </div>
          <div class="sh-filter">
            <div class="box">
              <button class="mark" aria-label="Bookmarks"><svg viewBox="0 0 10 16"><path d="M0 0h10v16l-5-4-5 4z" fill="#7aa6dc" /></svg></button>
              <input placeholder="Apply a display filter ... &lt;Ctrl-/&gt;" aria-label="Display filter" />
              <button class="go" aria-label="Apply"><svg viewBox="0 0 16 10"><path d="M0 3h9V0l7 5-7 5V7H0z" fill="#1f2937" /></svg></button>
              <i class="dd light" />
            </div>
            <button class="plus" aria-label="Add filter">+</button>
          </div>

          <div class="list">
            <div class="rows">
              <table>
                <colgroup><col class="c0" /><col class="c1" /><col class="c2" /><col class="c2" /><col class="c4" /><col class="c5" /><col /></colgroup>
                <thead><tr><th v-for="h in headers" :key="h">{{ h }}</th></tr></thead>
                <tbody>
                  <tr v-for="p in packets" :key="p.no" :class="p.tone">
                    <td class="n">{{ p.no }}</td><td>{{ p.time }}</td><td>{{ p.src }}</td><td>{{ p.dst }}</td><td>{{ p.proto }}</td><td class="n">{{ p.len }}</td><td>{{ p.info }}</td>
                  </tr>
                </tbody>
              </table>
              <svg class="rel" aria-hidden="true"><path d="M2 45l4 3 11-5M9 46h8" /><path d="M9.500 47v7" /><path class="mid" d="M9.500 54v18" /><path d="M9.500 72v135h8" /></svg>
            </div>
            <div class="mini"><i v-for="(t, i) in minimap" :key="i" :class="t" /></div>
          </div>
          <div class="hsplit"><i class="dots" /></div>
          <div class="lower">
            <div class="tree">
              <div v-for="(r, i) in tree" :key="i" class="trow" :class="[r.tone, 'l' + r.level]">
                <span class="tw"><i v-if="!r.leaf" :class="r.open ? 'open' : 'shut'" /></span><span class="tx">{{ r.text }}</span>
              </div>
            </div>
            <i class="vdots" />
            <div class="hex">
              <div v-for="r in hexRows" :key="r.off" class="hrow" :class="{ hot: r.mark }">
                <span class="off">{{ r.off }}</span>
                <span v-if="r.mark" class="by">{{ r.hex.slice(0, 6) }}<mark>{{ r.hex.slice(6, 11) }}</mark>{{ r.hex.slice(11) }}</span>
                <span v-else class="by">{{ r.hex }}</span>
                <span v-if="r.mark" class="as"><em>··</em><mark>·@</mark><em>{{ r.ascii.slice(4) }}</em></span>
                <span v-else class="as"><component :is="s[0] === '·' ? 'em' : 'span'" v-for="(s, i) in runs(r.ascii)" :key="i">{{ s }}</component></span>
              </div>
            </div>
          </div>
          <footer class="sh-status">
            <button aria-label="Expert information"><svg viewBox="0 0 14 14"><circle cx="7" cy="7" r="6.700" fill="url(#gBall)" /></svg></button>
            <button aria-label="Capture comment"><svg viewBox="0 0 14 14"><path d="M0 0h9l3 3v11H0z" fill="#eef0ea" /><path d="M0 0h9v3H0z" fill="#3c9ad8" /><path d="M2 6h5M2 8.500h4M2 11h6" stroke="#888" /><path d="M5 10l8-9 1 1-7 9-3 1z" fill="#3c3f45" /></svg></button>
            <span class="f1">Ethernet (eth), 14 bytes</span>
            <i class="vd" /><span class="f2">Packets: 24 · Displayed: 24 (100.0%) · Dropped: 0 (0.0%)</span>
            <i class="vd" /><span class="f3">Profile: Default</span>
            <i class="grip" />
          </footer>
        </section>
      </div>
    </section>
  </div>
</template>

<style>
html, body { margin: 0; background: #0f0f1a; }
</style>

<style scoped>
* { box-sizing: border-box; }
button { border: 0; background: none; padding: 0; margin: 0; font: inherit; color: inherit; display: flex; align-items: center; justify-content: center; white-space: nowrap; }
input { border: 0; background: none; padding: 0; margin: 0; font: inherit; outline: 0; min-width: 0; }
a { color: inherit; text-decoration: none; }
svg { display: block; flex: none; }
i { display: block; font-style: normal; flex: none; }
.defs { position: absolute; width: 0; height: 0; }
.s16 { width: 16px; height: 16px; }
.s14 { width: 14px; height: 14px; }
.s12 { width: 12px; height: 14px; }
.dd { border: 4px solid transparent; border-top: 5px solid #111; border-bottom: 0; }
.dd.dim { border-top-color: #777; }
.dd.light { border-top-color: #d8d8d8; border-width: 4px 3px 0; }

.desktop { position: relative; min-height: 100vh; overflow: hidden; background: linear-gradient(#181829 0 8px, #25253c 8px 9px, #10101a 9px); font-family: "Open Sans", "Noto Sans", sans-serif; font-size: 12px; line-height: 16px; }
.vm { position: absolute; display: flex; flex-direction: column; overflow: hidden; }
.vm-kali { left: 0; right: 730px; top: 1px; bottom: 0; border-radius: 8px 8px 0 0; box-shadow: 0 0 40px rgba(0, 0, 0, .35); }
.vm-win { right: 11px; top: 86px; bottom: 85px; width: 800px; border-radius: 8px; box-shadow: 0 6px 30px rgba(0, 0, 0, .5); }
.vm-title { display: flex; align-items: center; height: 37px; flex: none; padding-left: 8px; background: #f3f3f3; color: #8d8d8d; font: 14px/20px "Noto Sans", "Open Sans", sans-serif; }
.vm-logo { width: 20px; height: 20px; margin-right: 5px; }
.vm-name { flex: 1; white-space: nowrap; }
.vm-ctl { display: flex; }
.vm-ctl button { width: 59px; height: 37px; }
.vm-ctl svg { width: 14px; height: 14px; fill: none; stroke: #888; }
.vm-menu { display: flex; height: 21px; flex: none; align-items: center; padding-left: 2px; background: #3b3c3d; color: #fff; }
.vm-menu button { padding: 0 8px; height: 21px; }
.vm-win .vm-menu, .vm-win .vm-menu button { height: 22px; }

.panel { position: relative; display: flex; align-items: center; height: 35px; flex: none; background: linear-gradient(90deg, #20212c, #232433 40%, #25263a 70%, #1f202c); border-bottom: 1px solid #16161d; color: #d8d8dc; font-family: "Noto Sans", sans-serif; font-size: 14px; }
.streaks { position: absolute; inset: 0; width: 100%; height: 35px; }
.panel > :not(.streaks) { position: relative; }
.kali { width: 29px; height: 34px; padding-left: 3px; }
.kali svg { width: 25px; height: 25px; filter: drop-shadow(0 0 3px #2777ff); }
.bar { width: 2px; height: 25px; background: #85868e; margin: 0 3px 0 7px; flex: none; }
.launch { display: flex; margin-left: 2px; }
.launch button { width: 33px; height: 34px; }
.launch svg { width: 22px; height: 22px; }
.launch svg.d { height: 18px; }
.chev { width: 10px; height: 8px; }
.ws { width: 32px; height: 34px; border-bottom: 2px solid transparent; }
.ws.on { background: #171821; border-bottom-color: #2777ff; color: #e2c7b2; }
.panel > .task { position: relative; width: 34px; height: 34px; border-bottom: 2px solid transparent; }
.panel > .task.on { background: #171821; border-bottom-color: #2777ff; }
.task svg { width: 16px; height: 16px; }
.task .tt { width: 16px; height: 15px; opacity: .7; }
.task b { position: absolute; right: 2px; bottom: 0; width: 16px; height: 16px; border-radius: 8px; background: #f1f1f1; color: #111; font-size: 11px; line-height: 16px; text-align: center; }
.sys { margin-left: auto; display: flex; align-items: center; gap: 19px; padding-right: 9px; }
.sys svg { width: 16px; height: 16px; }
.sys time { margin: 0 -6px 0 -6px; }
.sys .bar { margin: 0 -6px 0 -3px; }

.wall { position: relative; flex: 1; overflow: hidden; background:
  repeating-linear-gradient(180deg, rgba(0, 0, 0, .14) 0 1px, transparent 1px 3px),
  repeating-linear-gradient(180deg, rgba(40, 10, 50, .26) 0, rgba(15, 10, 90, .26) 10px, rgba(0, 40, 60, .22) 22px, rgba(20, 10, 30, .22) 34px, rgba(40, 10, 50, .26) 42px),
  linear-gradient(90deg, #141730 0, #16163f 6%, #171d44 25%, #2a3062 45%, #282c5c 68%, #1c2052 78%, #15173c 88%, #14152e 100%); }
.art { position: absolute; inset: 0; width: 100%; height: 100%; }
.icons { position: absolute; left: 17px; top: 25px; width: 100px; display: flex; flex-direction: column; color: #f0f0f0; font-family: "Noto Sans", sans-serif; font-size: 14px; text-shadow: 1px 1px 1px #000; }
.icons a { height: 104px; display: flex; flex-direction: column; align-items: center; line-height: 20px; gap: 9px; }
.icons svg { height: 42px; width: 36px; }
.icons .hm { width: 44px; height: 42px; }

.term { position: absolute; left: 107px; right: 698px; top: 0; bottom: 44px; overflow: hidden; border: 1px solid #111218; border-radius: 8px; background: #23252e; color: #d8dadd; box-shadow: 0 4px 12px rgba(0, 0, 0, .5); }
.term-title { position: relative; height: 31px; display: flex; align-items: center; justify-content: center; padding-right: 42px; background: #1f202a; color: #70727c; font: 13px/18px "Noto Sans", sans-serif; }
.term-title svg { position: absolute; left: 9px; top: 8px; width: 16px; height: 14px; opacity: .7; }
.term-title div { position: absolute; right: 6px; top: 6px; display: flex; gap: 6px; }
.term-title div i { width: 18px; height: 18px; border-radius: 9px; background: #17181d; border: 1px solid #101116; }
.term-menu { display: flex; height: 23px; align-items: center; gap: 14px; margin-left: 5px; padding-left: 8px; border-bottom: 1px solid #1a1b21; font: 14px/20px "Noto Sans", sans-serif; color: #eee; }
.shell { margin: 5px 0 0 8px; font: 13px/16px "DejaVu Sans Mono", monospace; }
.shell b { color: #277fff; }
.shell .g { color: #4b9f87; }
.cursor { display: inline-block; width: 8px; height: 15px; border: 1px solid #ddd; vertical-align: top; }
.thumb { position: absolute; right: 5px; bottom: 5px; width: 6px; height: 40px; border-radius: 3px; background: #55575f; }

.shark { position: absolute; left: 165px; right: 133px; top: 18px; bottom: 59px; display: flex; flex-direction: column; overflow: hidden; border: 1px solid #0f1015; border-radius: 8px; background: #23252e; color: #f0f0f0; font: 14px/20px "Noto Sans", sans-serif; box-shadow: 0 4px 14px rgba(0, 0, 0, .5); }
.sh-title { position: relative; height: 30px; flex: none; display: flex; align-items: center; justify-content: space-between; padding: 0 5px 0 10px; }
.sh-title h1 { position: absolute; left: 0; right: 44px; margin: 0; text-align: center; font-size: 12px; line-height: 18px; }
.sh-title div { position: relative; display: flex; gap: 6px; }
.sh-title button { width: 18px; height: 18px; border-radius: 9px; background: #343743; border: 1px solid #101116; }
.sh-title .x { background: #2777ff; border-color: #2777ff; }
.sh-title .x svg { width: 18px; height: 18px; }
.sh-menu { display: flex; height: 25px; flex: none; margin: 0 4px; padding: 0 4px; border-bottom: 1px solid #75767c; }
.sh-menu button { display: block; padding: 0 8px; height: 24px; color: #fff; }
.sh-menu u { text-underline-offset: 3px; text-decoration-skip-ink: none; }
.sh-tools { display: flex; align-items: center; height: 39px; flex: none; margin: 0 4px; padding: 0 4px 2px 3px; border-bottom: 1px solid #6b6c72; }
.sh-tools button { width: 33px; height: 30px; }
.sh-tools svg { width: 24px; height: 24px; }
.sh-tools .on { border: 1px solid #3a3c46; border-radius: 3px; background: #1e2027; width: 31px; margin: 0 1px; }
.sh-tools .sep { width: 1px; height: 20px; margin: 0 3px; background: #1b1c22; }
.sh-filter { display: flex; height: 30px; flex: none; padding: 3px 22px 4px 8px; align-items: flex-start; gap: 4px; }
.box { flex: 1; height: 23px; display: flex; align-items: center; border: 1px solid #f2ebdd; border-radius: 3px; background: #262833; }
.box .mark { width: 18px; height: 21px; border-right: 1px solid #f2ebdd; }
.box .mark svg { width: 9px; height: 15px; }
.box input { flex: 1; margin-left: 4px; color: #fff; }
.box input::placeholder { color: #8a8b8f; opacity: 1; }
.go { width: 24px; height: 14px; background: #79a7dc; border-radius: 1px; margin-right: 8px; }
.go svg { width: 16px; height: 10px; }
.box .dd { margin-right: 4px; }
.plus { width: 16px; height: 23px; font: 24px/22px "Noto Sans", sans-serif; }

.list { display: flex; height: 263px; flex: none; margin: 0 4px; border: 1px solid #191a20; }
.rows { position: relative; flex: 1; overflow: hidden; background: #f9eed8; }
table { width: 100%; border-collapse: collapse; table-layout: fixed; }
.c0 { width: 80px; } .c1 { width: 126px; } .c2 { width: 189px; } .c4 { width: 72px; } .c5 { width: 54px; }
th { height: 23px; padding: 0 0 0 4px; text-align: left; font-weight: 400; line-height: 20px; background: #272b34; border-bottom: 1px solid #15161b; box-shadow: inset 0 1px #43454e, inset 1px 0 #484a52; color: #fff; white-space: nowrap; }
th:first-child { padding-left: 2px; box-shadow: inset 0 1px #43454e; }
td { height: 18px; padding: 0 0 0 4px; font: 15px/18px "Liberation Mono", monospace; color: #12272e; white-space: pre; }
td.n { text-align: right; padding: 0 2px 0 0; }
.arp { background: #f9eed8; }
.syn { background: #a0a0a0; }
.sel { background: #2777ff; }
.sel td { color: #e4edff; }
.tcp { background: #e6e5fe; }
.dns { background: #fbe0ff; }
.udp { background: #daeeff; }
.rel { position: absolute; left: 0; top: 23px; width: 20px; height: 220px; fill: none; stroke: #12272e; }
.rel .mid { stroke: #8b93a8; }
.mini { width: 48px; flex: none; padding-right: 40px; display: flex; flex-direction: column; border-left: 1px solid #55565c; }
.mini i { flex: 1; }
.hsplit { height: 4px; flex: none; display: flex; justify-content: center; align-items: center; }
.dots { width: 18px; height: 2px; background: repeating-linear-gradient(90deg, #77787d 0 2px, transparent 2px 3px); }
.lower { flex: 1; display: grid; grid-template-columns: 1188px 4px 1fr; margin: 0 4px; min-height: 0; }
.tree, .hex { border: 1px solid #191a20; background: #262833; overflow: hidden; font: 15px/18px "Liberation Mono", monospace; }
.trow { display: flex; height: 18px; white-space: pre; }
.tw { width: 20px; display: flex; align-items: center; justify-content: center; flex: none; }
.trow.l1 { padding-left: 20px; } .trow.l2 { padding-left: 40px; }
.tx { flex: 1; padding-left: 3px; }
.trow.top .tx { background: #20232b; }
.trow.picked { background: linear-gradient(#3b85ff, #2372fb); color: #e4edff; }
.trow.related .tx { background: #7fb6f7; color: #0d1620; }
.open { border: 4px solid transparent; border-top: 4px solid #b8babf; border-bottom: 0; }
.shut { border: 4px solid transparent; border-left: 4px solid #b8babf; border-right: 0; }
.vdots { width: 2px; height: 18px; margin: 124px 0 0 1px; background: repeating-linear-gradient(180deg, #77787d 0 2px, transparent 2px 3px); }
.hex { background: linear-gradient(90deg, #22252e 54px, #262833 54px); }
.hrow { display: flex; height: 17px; white-space: pre; }
.off { width: 62px; padding-left: 8px; color: #63656c; flex: none; }
.hot .off { color: #a8a9ae; }
.by { width: 460px; flex: none; }
.as em { font-style: normal; color: #6b6d74; }
mark { background: #2777ff; color: #e8efff; }
.sh-status { height: 29px; flex: none; display: flex; align-items: center; padding: 0 4px 0 14px; }
.sh-status button { margin-right: 9px; width: 14px; height: 14px; }
.sh-status svg { width: 14px; height: 14px; }
.f1 { flex: 1; padding-left: 9px; }
.f2 { width: 682px; padding-left: 13px; flex: none; }
.f3 { width: 130px; padding-left: 13px; flex: none; }
.vd { width: 2px; height: 17px; background: repeating-linear-gradient(180deg, #7b7c82 0 2px, transparent 2px 3px); }
.grip { width: 12px; height: 12px; align-self: flex-end; margin-bottom: 4px; background: repeating-linear-gradient(90deg, transparent 0 2px, #23252e 2px 3px), repeating-linear-gradient(180deg, #85868c 0 2px, #23252e 2px 3px); clip-path: polygon(100% 0, 100% 100%, 0 100%); }

.ie { flex: 1; display: flex; flex-direction: column; background: #b6cde8; color: #000; min-height: 0; font-size: 11px; }
.ie-title { display: flex; align-items: center; height: 23px; flex: none; padding: 0 2px 3px 16px; gap: 6px; background: linear-gradient(#9db5d2, #b4cbe7); white-space: nowrap; }
.ie-ctl { display: flex; gap: 3px; margin-left: auto; }
.ie-ctl button { width: 30px; height: 17px; border: 1px solid #5c7390; border-radius: 2px; background: linear-gradient(#c9d8ea, #9ab2cf 50%, #b7cde4); }
.ie-ctl svg { width: 16px; height: 12px; }
.ie-ctl .red { border-color: #5d1a14; background: linear-gradient(#e8a698, #c44a38 50%, #d6684e); }
.ie-nav { display: flex; height: 32px; flex: none; padding: 2px 2px 6px 78px; gap: 7px; }
.ie-addr { flex: 1; display: flex; align-items: center; padding-left: 7px; border: 1px solid #f07a92; background: #de93aa; }
.ie-addr .url { flex: 1; margin-left: 5px; height: 18px; color: transparent; background: linear-gradient(90deg, #7d6069 38px, #000 38px 115px, #7d6069 115px); background-clip: text; -webkit-background-clip: text; }
.cert { width: 118px; gap: 4px; height: 22px; }
.ie-addr .cell { width: 25px; height: 22px; border-left: 1px solid #7b4a57; }
.ie-search { width: 297px; display: flex; align-items: center; padding: 0 4px; gap: 6px; background: #eaf2fb; border: 1px solid #8fa9c6; }
.ie-search input { flex: 1; font-style: italic; font-size: 12px; }
.ie-search input::placeholder { color: #555; opacity: 1; }
.ie-fav { display: flex; align-items: center; gap: 9px; height: 32px; flex: none; border-top: 1px solid #a7bfd9; background: linear-gradient(#f2f8fe, #e0ecf9); color: #666; }
.ie-fav button { gap: 4px; }
.ie-fav .favs { width: 90px; height: 20px; border-right: 1px solid #9aa9bb; }
.ie-tabs { display: flex; align-items: flex-end; height: 31px; flex: none; padding-bottom: 4px; border-bottom: 1px solid #65696e; background: linear-gradient(#e0ecf9 0 26px, #8e9aa8 26px 27px, #eef5fc 27px); }
.tab { width: 304px; height: 30px; margin-bottom: -3px; justify-content: flex-start; padding-left: 6px; gap: 4px; border: 1px solid #8e9aa8; border-bottom: 0; border-radius: 3px 3px 0 0; background: linear-gradient(#bdd9f8, #e9f3fe 80%, #f4f9ff); font-size: 12px; }
.newtab { width: 30px; height: 24px; margin-left: 1px; border: 1px solid #8e9aa8; border-radius: 3px 3px 0 0; background: linear-gradient(#f4f9fe, #dfebf8); }
.ie-cmd { display: flex; align-items: center; gap: 12px; height: 27px; margin-left: auto; padding-right: 11px; }
.ie-cmd button { gap: 4px; }
.ie-cmd .wide { gap: 10px; }
.ie-cmd .tight { gap: 1px; }
.ie-body { flex: 1; display: flex; background: #fff; min-height: 0; }
.ie-page { flex: 1; padding-top: 17px; text-align: center; font: 15px/19px "Liberation Serif", serif; }
.ie-page p { margin: 0 0 19px; }
.ie-scroll { width: 17px; background: #f0f0f0; display: flex; flex-direction: column; justify-content: space-between; align-items: center; padding: 7px 0; }
.up { border: 4px solid transparent; border-bottom: 4px solid #777; border-top: 0; }
.down { border: 4px solid transparent; border-top: 4px solid #777; border-bottom: 0; }
.ie-status { display: flex; height: 23px; flex: none; border-top: 1px solid #8a8a8a; background: #f0eeee; }
.ie-status span { display: flex; align-items: center; }
.ie-status .grow { flex: 1; }
.ie-status .cellw { width: 24px; border-left: 1px solid #d2cfcf; }
.ie-status .zone { width: 270px; gap: 4px; padding-left: 4px; border-left: 1px solid #d2cfcf; }
.ie-status .prot { width: 45px; gap: 7px; padding-left: 7px; border-left: 1px solid #d2cfcf; }
.ie-status .zoomer { width: 101px; gap: 3px; padding-left: 11px; border-left: 1px solid #d2cfcf; }
.zoomer .dd { margin-left: 12px; }
.w-task { display: flex; height: 40px; flex: none; gap: 2px; padding-left: 58px; border-top: 1px solid #2f4053; background: #a6c0dd; font-size: 11px; }
.w-task > button { width: 60px; }
.w-task > .on { border: 1px solid #53687f; border-radius: 3px; background: linear-gradient(135deg, #d9e5f2, #afc4dd 60%, #b9cde3); }
.w-task > button svg { width: 32px; height: 32px; }
.w-tray { margin-left: auto; width: 200px; display: flex; align-items: center; justify-content: flex-end; gap: 8px; background: linear-gradient(90deg, #a6c0dd, #7f93ad 30px); color: #fff; }
.w-clock { display: flex; flex-direction: column; align-items: center; width: 62px; }
.w-tray .peek { width: 14px; height: 39px; border: 1px solid #3f4f63; background: linear-gradient(#b6c3d2, #5c6f87 50%, #8fa2ba); }
.vm-status { display: flex; height: 26px; flex: none; align-items: center; justify-content: flex-end; gap: 4px; padding-right: 1px; background: #3a3b3c; color: #fff; }
.vm-status svg { width: 19px; height: 19px; }
.vm-status .cpu { width: 12px; }
.vm-status .meter { width: 4px; }
.vm-status span { width: 60px; white-space: nowrap; }
</style>
